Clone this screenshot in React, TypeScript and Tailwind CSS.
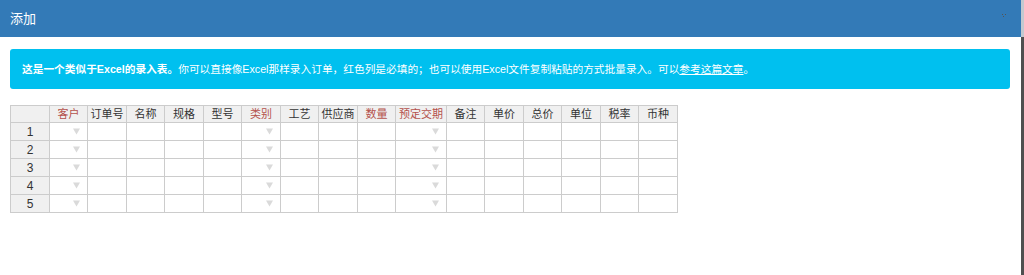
import React from "react";

type Col = { title: string; width: number; required?: boolean; dropdown?: boolean };

const COLUMNS: Col[] = [
  { title: "客户", width: 38, required: true, dropdown: true },
  { title: "订单号", width: 39 },
  { title: "名称", width: 38 },
  { title: "规格", width: 39 },
  { title: "型号", width: 38 },
  { title: "类别", width: 39, required: true, dropdown: true },
  { title: "工艺", width: 38 },
  { title: "供应商", width: 39 },
  { title: "数量", width: 38, required: true },
  { title: "预定交期", width: 51, required: true, dropdown: true },
  { title: "备注", width: 38 },
  { title: "单价", width: 39 },
  { title: "总价", width: 38 },
  { title: "单位", width: 39 },
  { title: "税率", width: 38 },
  { title: "币种", width: 39 },
];

const ROWS = [1, 2, 3, 4, 5];

const FONT = { fontFamily: '"Liberation Sans", "Noto Sans CJK SC", sans-serif' };

function Arrow() {
  return (
    <svg width="7" height="7" viewBox="0 0 7 7" className="ml-auto mr-[7px]">
      <path d="M0 0.5h7L3.5 6.5z" fill="#dadada" />
    </svg>
  );
}

function Grid() {
  return (
    <div className="text-[11px] text-[#222]">
      {/* header */}
      <div className="flex h-[18px]">
        <div className="w-[40px] shrink-0 border border-[#ccc] bg-[#f0f0f0]" />
        {COLUMNS.map((c) => (
          <div
            key={c.title}
            style={{ width: c.width }}
            className={
              "flex shrink-0 items-center justify-center border-y border-r border-[#ccc] bg-[#f0f0f0] " +
              (c.required ? "text-[#b5524c]" : "text-[#333]")
            }
          >
            {c.title}
          </div>
        ))}
      </div>
      {ROWS.map((r) => (
        <div key={r} className="flex h-[18px]">
          <div className="flex w-[40px] shrink-0 items-center justify-center border-x border-b border-[#ccc] bg-[#f0f0f0] text-[12px] text-[#333]">
            {r}
          </div>
          {COLUMNS.map((c) => (
            <div
              key={c.title}
              style={{ width: c.width }}
              className="flex shrink-0 items-center border-b border-r border-[#ccc] bg-white"
            >
              {c.dropdown && <Arrow />}
            </div>
          ))}
        </div>
      ))}
    </div>
  );
}

export default function App() {
  return (
    <div className="flex h-[275px] w-[1024px] overflow-hidden bg-white" style={FONT}>
      <div className="min-w-0 flex-1">
        <header className="flex h-[37px] items-center justify-between bg-[#337ab7] pl-[10px] pr-[14px]">
          <span className="text-[13px] text-white">添加</span>
          <svg width="5" height="5" viewBox="0 0 5 5" className="mb-[4px]">
            <rect x="0" y="0" width="1" height="1" fill="#555" />
            <rect x="3" y="0" width="1" height="1" fill="#555" />
            <rect x="1" y="2" width="1" height="1" fill="#555" />
          </svg>
        </header>

        <div className="pl-[10px] pr-[11px] pt-[12px]">
          <div className="flex h-[40px] items-center rounded-[3px] bg-[#00c0ef] px-[12px] text-[10.7px] text-white">
            <span>
              <b>这是一个类似于Excel的录入表。</b>
              你可以直接像Excel那样录入订单，红色列是必填的；也可以使用Excel文件复制粘贴的方式批量录入。可以
              <a href="#" className="underline">
                参考这篇文章
              </a>
              。
            </span>
          </div>

          <div className="mt-[16px]">
            <Grid />
          </div>
        </div>
      </div>
      <div className="flex w-[3px] flex-col">
        <div className="h-[37px] bg-[#c3c9d0]" />
        <div className="flex-1 bg-[#4f4f4f]" />
      </div>
    </div>
  );
}
